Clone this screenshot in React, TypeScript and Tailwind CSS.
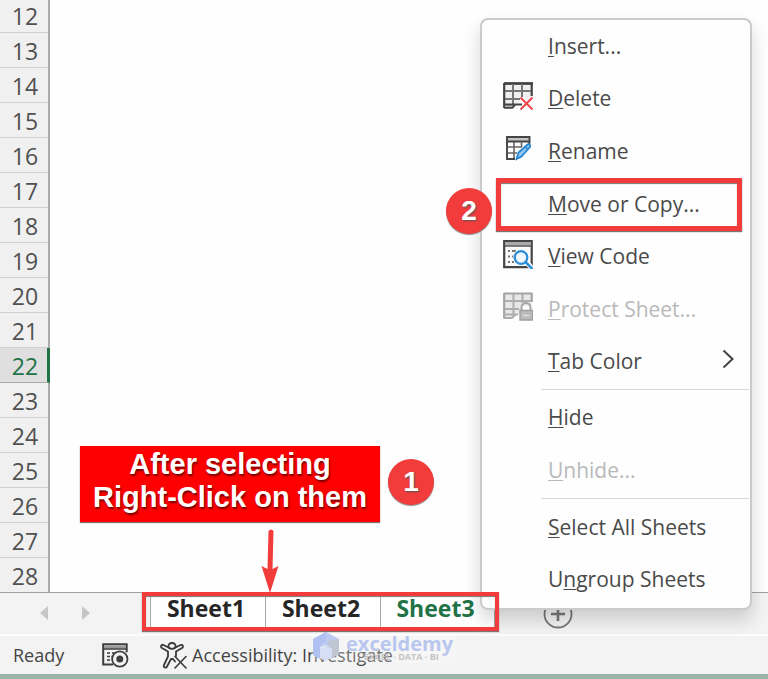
import type { ReactNode } from "react";

const rows = [12, 13, 14, 15, 16, 17, 18, 19, 20, 21, 22, 23, 24, 25, 26, 27, 28];

function DeleteIcon() {
  return (
    <svg width="30" height="28" viewBox="0 0 30 28" fill="none">
      <path d="M1.500 1h27v14l-4 4-3-3-5 3v3h-5l-2 4h-8z" fill="#f0f0f0" />
      <path d="M1 1.500h29" stroke="#444" strokeWidth="2.8" />
      <path d="M1.200 1v25M28.700 1v13" stroke="#444" strokeWidth="2.2" />
      <path d="M2 9h26M2 17h15M10 2v20M19 2v13" stroke="#777" strokeWidth="2" />
      <path d="M2 24h8" stroke="#b5b5b5" strokeWidth="2" />
      <path d="M1 22.500h18M1 25.800h8.500l2.500-3" stroke="#444" strokeWidth="1.8" />
      <path d="M17.500 15.500l12 12M29.500 15.500l-12 12" stroke="#f0474b" strokeWidth="2" />
    </svg>
  );
}

function RenameIcon() {
  return (
    <svg width="25" height="25" viewBox="0 0 25 25" fill="none">
      <path d="M1 1h22.500v4.500H1z" fill="#c4c4c4" stroke="#444" strokeWidth="1.9" />
      <path d="M1 5v18h8M23.300 5v4" stroke="#444" strokeWidth="1.9" />
      <path d="M2 11h14M2 17h9M8 6v16M15.500 6v5" stroke="#666" strokeWidth="1.6" />
      <path d="M10.500 23l2-6.500 9-8c1.500-1 3.500 1 2.500 2.500l-8.500 9.500z" fill="#8fc6ee" stroke="#2384cf" strokeWidth="1.7" />
      <path d="M19 10.500l3 3" stroke="#2384cf" strokeWidth="1.300" />
    </svg>
  );
}

function CodeIcon() {
  return (
    <svg width="30" height="29" viewBox="0 0 30 29" fill="none">
      <path d="M1.200 1.200h27.500v26H1.200z" fill="#fafafa" stroke="#444" strokeWidth="2.2" />
      <path d="M2 2h26v3.500H2z" fill="#aaa" />
      <path d="M2 6h26" stroke="#555" strokeWidth="1.5" />
      <path d="M5 11h2M9 11h4M5 16.500h2M9 16.500h2M5 22h2M9 22h2" stroke="#777" strokeWidth="1.8" />
      <circle cx="18" cy="17.500" r="8" fill="#fff" />
      <path d="M22 21l8 8" stroke="#fff" strokeWidth="5" />
      <circle cx="18" cy="17.500" r="6.300" fill="#eef7fd" stroke="#2c8ed8" strokeWidth="2.300" />
      <path d="M22.500 22l7 7" stroke="#2c8ed8" strokeWidth="2.600" />
    </svg>
  );
}

function ProtectIcon() {
  return (
    <svg width="30" height="29" viewBox="0 0 30 29" fill="none">
      <path d="M1.200 1.500h27.500V14H18v8h-6l-2 4.500H1.200z" fill="#e8e8e8" />
      <path d="M1 1.500h28.500M1.200 1v25.500M28.700 1v9" stroke="#a3a3a3" strokeWidth="2.2" />
      <path d="M2 9h26M2 17h14M10.500 2v20M19.500 2v9M1 22.500h14M1 26h8l3-3" stroke="#adadad" strokeWidth="2" />
      <path d="M18.500 19v-3.500a4.500 4.500 0 019 0V19" stroke="#a5a5a5" strokeWidth="2" />
      <path d="M17 18.500h12.500V28H17z" fill="#bbb" stroke="#a0a0a0" strokeWidth="1.4" />
      <path d="M20 23.500h6.500" stroke="#ddd" strokeWidth="1.6" />
    </svg>
  );
}

function MacroIcon() {
  return (
    <svg width="27" height="25" viewBox="0 0 27 25" fill="none" stroke="#3d3d3d">
      <path d="M11 21.500H1.200V1.200h23.500v8" strokeWidth="2" />
      <path d="M2 2.500h22v3H2z" fill="#999" stroke="none" />
      <path d="M2 6h22" strokeWidth="1.5" />
      <path d="M5 10h3M10 10h4M5 13.500h3M5 17h3M9.500 13.500h1" strokeWidth="1.6" />
      <circle cx="17.800" cy="16" r="7.700" fill="#f3f3f3" strokeWidth="1.8" />
      <circle cx="17.800" cy="16" r="3.500" fill="#3d3d3d" stroke="none" />
    </svg>
  );
}

function AccessIcon() {
  return (
    <svg width="27" height="27" viewBox="0 0 27 27" fill="none" stroke="#3a3a3a" strokeWidth="1.8" strokeLinejoin="round" strokeLinecap="round">
      <path d="M8.500 5C8 2.500 9.500 1 12 1s4 1.500 3.500 4" />
      <path d="M8.500 5.500L3.500 3C1.500 2 0 5 2 6l6 3.500v5L4 23c-1 2.500 2 3.500 3 1.500l4-7.500h2l2 2.500" />
      <path d="M8.500 5.500c2 1.500 5 1.500 7 0l5-2.500c2-1 3.500 2 1.500 3l-6 3.500V14" />
      <path d="M15 14.500L26 26M26 14.500L15 26" strokeWidth="1.6" />
    </svg>
  );
}

type ItemProps = { label: ReactNode; icon?: ReactNode; disabled?: boolean; more?: boolean };

function MenuItem({ label, icon, disabled, more }: ItemProps) {
  return (
    <button
      type="button"
      role="menuitem"
      disabled={disabled}
      className="flex w-full flex-1 items-center pb-px pr-4 text-left text-[21px] leading-7 text-[#4a4a4a] disabled:text-[#b9b9b9]"
    >
      <span className="flex w-[66px] justify-center pb-1 pl-[6px]">{icon}</span>
      <span className="flex-1">{label}</span>
      {more && (
        <svg width="12" height="20" viewBox="0 0 12 20" fill="none" className="mb-1">
          <path d="M1.500 1.500l9 8.500-9 8.500" stroke="#444" strokeWidth="2" />
        </svg>
      )}
    </button>
  );
}

function Key({ children }: { children: string }) {
  return <span className="underline decoration-1 underline-offset-2">{children}</span>;
}

function Badge({ children }: { children: string }) {
  return (
    <span className="flex size-[46px] items-center justify-center rounded-full bg-[#f23c3c] font-['Liberation_Sans',sans-serif] text-[28px] font-bold text-white shadow-[0_1px_1px_#888] [text-shadow:1px_1px_2px_#555]">
      {children}
    </span>
  );
}

function ContextMenu() {
  return (
    <div
      role="menu"
      className="absolute left-[480px] top-[18px] w-[272px] rounded-lg border-2 border-[#cbcbcb] bg-[#fefefe] pb-[2px] shadow-[0_10px_18px_rgba(0,0,0,0.16)]"
    >
      <div className="flex h-[368px] flex-col">
        <MenuItem label={<><Key>I</Key>nsert...</>} />
        <MenuItem icon={<DeleteIcon />} label={<><Key>D</Key>elete</>} />
        <MenuItem icon={<RenameIcon />} label={<><Key>R</Key>ename</>} />
        <MenuItem label={<><Key>M</Key>ove or Copy...</>} />
        <MenuItem icon={<CodeIcon />} label={<><Key>V</Key>iew Code</>} />
        <MenuItem disabled icon={<ProtectIcon />} label={<><Key>P</Key>rotect Sheet...</>} />
        <MenuItem more label={<><Key>T</Key>ab Color</>} />
      </div>
      <hr className="my-px ml-[59px] mr-px border-[#d8d8d8]" />
      <div className="flex h-[106px] flex-col">
        <MenuItem label={<><Key>H</Key>ide</>} />
        <MenuItem disabled label={<><Key>U</Key>nhide...</>} />
      </div>
      <hr className="mb-[2px] ml-[59px] mr-px mt-px border-[#d8d8d8]" />
      <div className="flex h-[105px] flex-col">
        <MenuItem label={<><Key>S</Key>elect All Sheets</>} />
        <MenuItem label={<>U<Key>n</Key>group Sheets</>} />
      </div>
    </div>
  );
}

export default function App() {
  return (
    <div className="relative w-full overflow-hidden bg-[#f3f3f3] font-['Open_Sans','Noto_Sans',sans-serif]">
      <main className="flex border-b border-[#a0a0a0] bg-[#fefefe]">
        <div className="-mt-[2px] w-[50px] border-r-2 border-[#ababab] bg-[#f0f0f0]">
          {rows.map((n) =>
            n === 22 ? (
              <div key={n} className="-mr-[2px] flex h-[35px] items-center justify-center border-b border-r-[3px] border-b-[#aaa] border-r-[#217346] bg-[#dfdfdf] pl-[3px] pt-[2px] text-[23px] leading-6 text-[#217346]">
                {n}
              </div>
            ) : (
              <div key={n} className="flex h-[35px] items-center justify-center border-b border-[#cfcfcf] pl-[2px] pt-[2px] text-[23px] leading-6 text-[#505050] last:h-[34px] last:border-transparent">
                {n}
              </div>
            ),
          )}
        </div>
        <div className="flex-1" />
      </main>

      <nav aria-label="Sheets" className="flex h-[43px] items-start border-b-2 border-[#fcfcfc]">
        <div className="flex w-[150px] gap-[34px] pl-10 pt-[13px]">
          <button type="button" aria-label="Previous sheet">
            <svg width="8" height="14" viewBox="0 0 8 14"><path d="M8 0v14L0 7z" fill="#c6c6c6" /></svg>
          </button>
          <button type="button" aria-label="Next sheet">
            <svg width="8" height="14" viewBox="0 0 8 14"><path d="M0 0v14l8-7z" fill="#c6c6c6" /></svg>
          </button>
        </div>
        <div className="flex h-9 bg-white text-[23px] font-bold leading-[30px] text-[#262626]">
          <button type="button" className="flex w-[115px] justify-center border-l border-[#a8a8a8] pr-1">Sheet1</button>
          <button type="button" className="flex w-[115px] justify-center border-l border-[#a8a8a8] pr-1">Sheet2</button>
          <button type="button" className="flex w-[115px] justify-center border-x border-[#a8a8a8] pr-1 text-[#217346]">Sheet3</button>
        </div>
        <button type="button" aria-label="New sheet" className="ml-12 mt-[6px]">
          <svg width="30" height="30" viewBox="0 0 30 30" fill="none" stroke="#777">
            <circle cx="15" cy="15" r="13.500" strokeWidth="1.800" />
            <path d="M15 8v14M8 15h14" strokeWidth="2.600" />
          </svg>
        </button>
      </nav>

      <footer className="flex h-[44px] items-center border-b-[6px] border-[#9bb3a8] pl-[13px] text-lg text-[#444]">
        <span className="w-[89px]">Ready</span>
        <button type="button" aria-label="Record macro" className="w-[58px]"><MacroIcon /></button>
        <button type="button" className="flex items-center gap-[5px]">
          <AccessIcon />
          Accessibility: Investigate
        </button>
      </footer>

      <div className="absolute left-[312px] top-[632px] flex h-[31px] w-[144px] items-start gap-1 bg-white/25">
        <svg width="30" height="30" viewBox="0 0 30 30">
          <path d="M14 0l13 7v15l-8 4v-9l-6-4-7 4v9l-5-3V7z" fill="#bccaf1" />
          <path d="M14 0L1 7v16l7 4V13l6-4z" fill="#afc1f0" />
          <path d="M15 9l12-2v15l-8 5v-9z" fill="#bfc6d2" />
          <path d="M8 17l6-4 6 4v8l-6 4-6-3z" fill="#d6def5" />
        </svg>
        <div className="font-bold">
          <div className="text-[20px] leading-6 text-[#b9c7ef]">exceldemy</div>
          <div className="-mt-1 pl-[18px] text-[9px] leading-[10px] text-[#c4c4c4]">EXCEL · DATA · BI</div>
        </div>
      </div>

      <ContextMenu />

      <div className="absolute left-[80px] top-[446px] h-[76px] w-[300px] bg-[#fe0000] pt-[2px] text-center font-['Liberation_Sans',sans-serif] text-[29px] font-bold leading-[33px] text-white shadow-[0_1px_1px_#777] [text-shadow:1px_2px_2px_#700]">
        After selecting<br />Right-Click on them
      </div>
      <div className="absolute left-[388px] top-[459px]"><Badge>1</Badge></div>
      <div className="absolute left-[446px] top-[188px]"><Badge>2</Badge></div>
      <svg className="absolute left-[260px] top-[529px]" width="20" height="65" viewBox="0 0 20 65">
        <path d="M8.500 2q2.500-3 5 0l-1 38 6-3L10 64 1.500 37l6 3z" fill="#f23c3c" />
      </svg>
      <div className="absolute left-[496px] top-[178px] h-[53px] w-[246px] border-[5px] border-[#f23c3c] shadow-[0_1px_1px_#777,inset_0_1px_1px_#777]" />
      <div className="absolute left-[142px] top-[592px] h-[39px] w-[357px] border-[4px] border-[#f23c3c] shadow-[0_1px_1px_#777,inset_0_1px_1px_#777]" />
    </div>
  );
}
